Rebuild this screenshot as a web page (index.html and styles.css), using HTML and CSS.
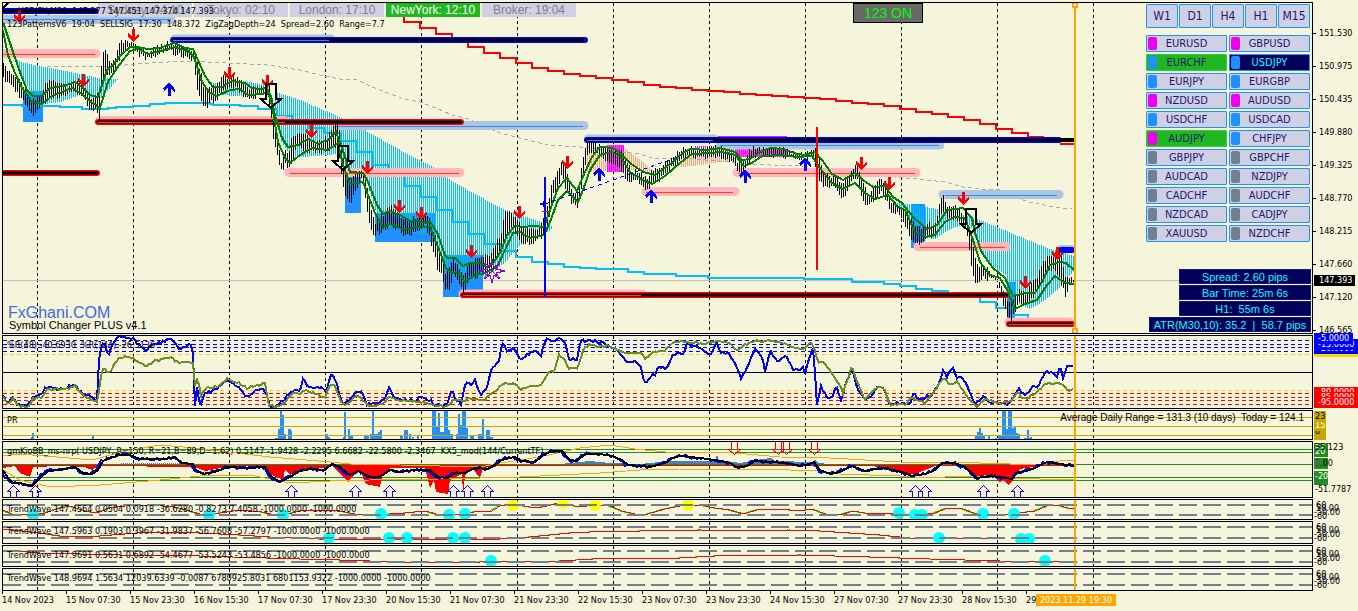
FILE: index.html
```html
<!DOCTYPE html>
<html lang="en">
<head>
<meta charset="utf-8">
<title>USDJPY,M30</title>
<link rel="stylesheet" href="styles.css">
</head>
<body>
<main class="terminal">
  <section class="panel">
    <div class="plot">
      <svg class="chart" id="price" viewBox="3 3 1309 330" preserveAspectRatio="none"></svg>
      <div class="hud">
        <div class="hud-left">
          <div class="sessions">
            <span class="session">Sydney: 04:10</span>
            <span class="session">Tokyo: 02:10</span>
            <span class="session">London: 17:10</span>
            <span class="session open">NewYork: 12:10</span>
            <span class="session">Broker: 19:04</span>
          </div>
          <div class="readout">123PatternsV6&nbsp; 19:04&nbsp; SELLSIG&nbsp; 17:30&nbsp; 148.372&nbsp; ZigZagDepth=24&nbsp; Spread=2.60&nbsp; Range=7.7</div>
          <div class="brand">FxGhani.COM</div>
          <div class="product">Symbol Changer PLUS v4.1</div>
        </div>
        <div class="hud-right">
          <div class="frames">
            <button>W1</button><button>D1</button><button>H4</button><button>H1</button><button>M15</button>
          </div>
          <div class="symbols">
            <button class="up">EURUSD</button><button class="up">GBPUSD</button>
            <button class="down signal">EURCHF</button><button class="down current">USDJPY</button>
            <button class="down">EURJPY</button><button class="down">EURGBP</button>
            <button class="up">NZDUSD</button><button class="up">AUDUSD</button>
            <button class="down">USDCHF</button><button class="down">USDCAD</button>
            <button class="up signal">AUDJPY</button><button class="down">CHFJPY</button>
            <button>GBPJPY</button><button>GBPCHF</button>
            <button>AUDCAD</button><button>NZDJPY</button>
            <button>CADCHF</button><button>AUDCHF</button>
            <button>NZDCAD</button><button>CADJPY</button>
            <button>XAUUSD</button><button>NZDCHF</button>
          </div>
          <div class="info">
            <span>Spread: 2.60 pips</span>
            <span>Bar Time: 25m 6s</span>
            <span>H1:&nbsp; 55m 6s</span>
            <span class="wide">ATR(M30,10): 35.2&nbsp; |&nbsp; 58.7 pips</span>
          </div>
        </div>
        <div class="title">USDJPY,M30&nbsp; 147.377 147.451 147.374 147.393</div>
        <button class="toggle">123 ON</button>
      </div>
    </div>
    <div class="scale prices">
      <span>151.530</span><span>150.975</span><span>150.435</span><span>149.880</span><span>149.325</span>
      <span>148.770</span><span>148.215</span><span>147.660</span><span>147.120</span><span>146.565</span>
      <b class="last">147.393</b>
    </div>
  </section>

  <section class="panel">
    <div class="plot">
      <svg class="chart" id="wpr" viewBox="3 336 1309 72" preserveAspectRatio="none"></svg>
      <div class="label">%R(48) -40.6930&nbsp; %R(144) -26.5136</div>
    </div>
    <div class="scale stack">
      <div class="tag gold" style="top:11px">-25.0000</div>
      <div class="tag blue" style="top:8px">-20.0000</div>
      <div class="tag blue" style="top:4px">-15.0000</div>
      <div class="tag blue first" style="top:-2px">-5.0000</div>
      <div class="tag red" style="top:52px">-80.0000</div>
      <div class="tag red" style="top:57px">-85.0000</div>
      <div class="tag red" style="top:62px">-95.0000</div>
    </div>
  </section>

  <section class="panel">
    <div class="plot">
      <svg class="chart" id="pr" viewBox="3 411 1309 28" preserveAspectRatio="none"></svg>
      <div class="label">PR</div>
      <div class="range">Average Daily Range = 131.3 (10 days)&nbsp; Today = 124.1</div>
    </div>
    <div class="scale stack">
      <div class="tag ochre" style="top:19px">10</div>
      <div class="tag ochre dark" style="top:16px">8</div>
      <div class="tag ochre" style="top:10px">15</div>
      <div class="tag ochre dark" style="top:1px">23</div>
    </div>
  </section>

  <section class="panel">
    <div class="plot">
      <svg class="chart" id="kio" viewBox="3 442 1309 55" preserveAspectRatio="none"></svg>
      <div class="label">gmKioBB_ms-nrp( USDJPY, P=150, R=21,B=89,D=1.62) 0.5147 -1.9428 -2.2295 6.6682 -22.5800 -2.3467&nbsp; KX5_mod(144/CurrentTF)</div>
    </div>
    <div class="scale stack">
      <div class="tag green" style="top:2px">30</div>
      <div class="tag green" style="top:5px">20</div>
      <div class="tag plain" style="top:1px">35.123</div>
      <div class="tag green" style="top:17px">0</div>
      <div class="tag plain" style="top:17px">0.00</div>
      <div class="tag green" style="top:33px">-30</div>
      <div class="tag green" style="top:30px">-20</div>
      <div class="tag plain" style="top:43px">-51.7787</div>
    </div>
  </section>

  <section class="panel">
    <div class="plot">
      <svg class="chart" id="wave1" viewBox="3 500 1309 19" preserveAspectRatio="none"></svg>
      <div class="label">TrendWave 147.4564 0.0504 0.0918 -36.6280 -0.8273 7.4058 -1000.0000 -1000.0000</div>
    </div>
    <div class="scale stack wave"><i>60</i><i>50.00</i><i>-50.00</i><i>-60</i></div>
  </section>
  <section class="panel">
    <div class="plot">
      <svg class="chart" id="wave2" viewBox="3 522 1309 21" preserveAspectRatio="none"></svg>
      <div class="label">TrendWave 147.5963 0.1903 0.3967 -31.9837 -56.7608 -57.2797 -1000.0000 -1000.0000</div>
    </div>
    <div class="scale stack wave"><i>60</i><i>50.00</i><i>-50.00</i><i>-60</i></div>
  </section>
  <section class="panel">
    <div class="plot">
      <svg class="chart" id="wave3" viewBox="3 546 1309 20" preserveAspectRatio="none"></svg>
      <div class="label">TrendWave 147.9691 0.5631 0.6892 -54.4677 -53.5243 -53.4856 -1000.0000 -1000.0000</div>
    </div>
    <div class="scale stack wave"><i>60</i><i>50.00</i><i>-50.00</i><i>-60</i></div>
  </section>
  <section class="panel">
    <div class="plot">
      <svg class="chart" id="wave4" viewBox="3 569 1309 21" preserveAspectRatio="none"></svg>
      <div class="label">TrendWave 148.9694 1.5634 12039.6339 -0.0087 6780925.8031 6801153.9322 -1000.0000 -1000.0000</div>
    </div>
    <div class="scale stack wave"><i>60</i><i>50.00</i><i>-50.00</i><i>-60</i></div>
  </section>

  <footer class="dates">
    <span>14 Nov 2023</span><span>15 Nov 07:30</span><span>15 Nov 23:30</span><span>16 Nov 15:30</span>
    <span>17 Nov 07:30</span><span>17 Nov 23:30</span><span>20 Nov 15:30</span><span>21 Nov 07:30</span>
    <span>21 Nov 23:30</span><span>22 Nov 15:30</span><span>23 Nov 07:30</span><span>23 Nov 23:30</span>
    <span>24 Nov 15:30</span><span>27 Nov 07:30</span><span>27 Nov 23:30</span><span>28 Nov 15:30</span>
    <span class="end"><span class="cut">29</span><b>2023.11.29 19:30</b></span>
  </footer>
</main>
<script src="chart.js"></script>
</body>
</html>
```
FILE: styles.css
```css
* { box-sizing: border-box; }

body {
  margin: 0;
  background: #f5f5dc;
  color: #000;
  font: 9px/12px "DejaVu Sans Condensed", "DejaVu Sans", sans-serif;
}

.terminal {
  display: grid;
  grid-template-rows: minmax(332px, 1fr) 74px 30px 57px 21px 23px 22px 23px 20px;
  row-gap: 1px;
  min-height: 100vh;
  padding: 2px 0 0 2px;
  overflow: hidden;
}

.panel {
  display: grid;
  grid-template-columns: minmax(0, 1fr) 45px;
  min-height: 0;
}
.plot {
  position: relative;
  border: 1px solid #000;
  min-width: 0;
}
.chart {
  position: absolute;
  inset: 0;
  width: 100%;
  height: 100%;
  overflow: hidden;
  shape-rendering: crispEdges;
}

.label {
  position: absolute;
  left: 4px;
  top: 3px;
  white-space: nowrap;
}
.range {
  position: absolute;
  right: 8px;
  top: 1px;
  white-space: nowrap;
  font: 10px/12px "Liberation Sans", Arial, sans-serif;
}

/* Overlay on the price chart */
.hud {
  position: absolute;
  inset: 0;
  display: flex;
  justify-content: space-between;
  font-family: "Liberation Sans", Arial, sans-serif;
}
.hud-left {
  display: flex;
  flex-direction: column;
}
.sessions {
  display: flex;
  gap: 2px;
  padding-left: 95px;
}
.session {
  width: 94px;
  height: 14px;
  background: #d0d0e4;
  color: #808080;
  font-size: 12px;
  line-height: 14px;
  text-align: center;
}
.session.open { background: #20b820; color: #fff; }
.title {
  position: absolute;
  left: 15px;
  top: 2px;
  font: 10px/12px "DejaVu Sans Condensed", "DejaVu Sans", sans-serif;
}
.readout {
  padding: 1px 0 0 4px;
  font: 9px/12px "DejaVu Sans Condensed", "DejaVu Sans", sans-serif;
  white-space: nowrap;
}
.title { font-size: 9px; }
.brand {
  margin-top: auto;
  padding-left: 5px;
  color: #4169e1;
  font-size: 16px;
  line-height: 10px;
}
.product {
  padding: 0 0 1px 6px;
  font-size: 11px;
  line-height: 14px;
}
.toggle {
  position: absolute;
  top: 0;
  right: 389px;
  width: 70px;
  height: 20px;
  padding: 0;
  border: 1px solid #000;
  background: #696969;
  color: #0f0;
  font: 14px/18px "Liberation Sans", Arial, sans-serif;
}

.hud-right {
  display: flex;
  flex-direction: column;
  align-items: flex-end;
  padding-top: 1px;
}
.frames {
  display: grid;
  grid-template-columns: repeat(5, 32px);
  column-gap: 1px;
  padding-right: 2px;
}
.frames button,
.symbols button {
  padding: 0;
  border: 1px solid #1e90ff;
  border-radius: 1px;
  background: #d0d0e4;
  color: #191970;
  font: 11px/14px "DejaVu Sans Condensed", "DejaVu Sans", sans-serif;
}
.frames button { height: 24px; font-size: 12px; }
.symbols {
  display: grid;
  grid-template-columns: 81px 81px;
  gap: 2px;
  padding: 7px 2px 0 0;
}
.symbols button {
  position: relative;
  height: 17px;
  text-align: center;
}
.symbols button::before {
  content: "";
  position: absolute;
  left: 1px;
  top: 1px;
  width: 9px;
  height: 13px;
  border-radius: 2px;
  background: #708090;
}
.symbols .up::before { background: #f000f0; }
.symbols .down::before { background: #1e90ff; }
.symbols .signal { background: #20b820; border-color: #32cd32; }
.symbols .current { background: #00005a; color: #0ff; }

.info {
  display: flex;
  flex-direction: column;
  align-items: flex-end;
  gap: 1px;
  margin-top: auto;
  padding: 0 1px 1px 0;
}
.info span {
  width: 132px;
  height: 15px;
  border: 1px solid #191970;
  background: #00005a;
  color: #0ff;
  font-size: 11px;
  line-height: 14px;
  text-align: center;
}
.info .wide { width: 162px; }

/* Scales */
.scale { position: relative; }
.prices {
  display: flex;
  flex-direction: column;
  padding-top: 15px;
  height: 332px;
}
.prices span {
  flex: none;
  height: 33px;
  line-height: 33px;
  display: flex;
  align-items: center;
}
.prices span::before {
  content: "";
  width: 3px;
  height: 1px;
  margin-right: 3px;
  background: #000;
}
.last {
  position: absolute;
  left: 1px;
  top: 273px;
  width: 41px;
  padding-left: 5px;
  background: #000;
  color: #fff;
  font-weight: normal;
  line-height: 11px;
}
.tag {
  position: absolute;
  left: 1px;
  padding-left: 4px;
  line-height: 11px;
  width: 44px;
  color: #fff;
}
.tag.first { width: 39px; }
.gold { background: #ffd700; }
.blue { background: #00f; }
.red { background: #f00; }
.ochre { background: #c8a800; width: 12px; padding-left: 1px; }
.green { background: #228b22; width: 14px; padding-left: 1px; }
.plain { color: #000; padding-left: 1px; }
.dark { color: #000; }
.wave i {
  position: absolute;
  left: 3px;
  top: 1px;
  font-style: normal;
  line-height: 11px;
}
.wave i:nth-child(2) { top: 4px; }
.wave i:nth-child(3) { top: 8px; left: 1px; }
.wave i:nth-child(4) { top: 12px; left: 1px; }

.dates {
  display: grid;
  grid-template-columns: repeat(16, 64fr) 332fr;
  margin-top: -1px;
  white-space: nowrap;
}
.dates > span {
  min-width: 0;
  line-height: 13px;
}
.dates > span::before {
  content: "";
  display: block;
  width: 1px;
  height: 3px;
  background: #000;
}
.cut {
  display: inline-block;
  width: 10px;
  vertical-align: top;
}
.end b {
  display: inline-block;
  width: 80px;
  background: #ffa500;
  color: #fff;
  font-weight: normal;
  line-height: 12px;
  text-align: center;
  vertical-align: top;
}
```
FILE: chart.js
```js
const NS = "http://www.w3.org/2000/svg";
let target;

function add(name, attrs) {
  const el = document.createElementNS(NS, name);
  for (const key in attrs) el.setAttribute(key, attrs[key]);
  target.appendChild(el);
}
const pts = text => text.trim().split(/\s+/).map(p => p.split(",").map(Number));
function at(list, x, column = 1) {
  for (let i = 1; i < list.length; i++) {
    if (x <= list[i][0]) {
      const a = list[i - 1], b = list[i];
      return a[column] + (b[column] - a[column]) * (x - a[0]) / (b[0] - a[0] || 1);
    }
  }
  return list[list.length - 1][column];
}
const poly = (list, stroke, width, dash) => add("polyline", {
  points: list.map(p => p.join(",")).join(" "), fill: "none", stroke,
  "stroke-width": width, "stroke-dasharray": dash || "none"
});
const line = (x1, y1, x2, y2, stroke, width, dash) => add("line", {
  x1, y1, x2, y2, stroke, "stroke-width": width || 1, "stroke-dasharray": dash || "none"
});
const rect = (x, y, width, height, fill) => add("rect", { x, y, width, height, fill });
const shape = (x, y, d, fill, stroke, width) => add("path", {
  d, fill, stroke: stroke || "none", "stroke-width": width || 0, transform: `translate(${x} ${y})`
});
const cap = (x1, x2, y, stroke, width) => add("line", {
  x1, x2, y1: y, y2: y, stroke, "stroke-width": width, "stroke-linecap": "round",
  "shape-rendering": "auto"
});
let seed = 7;
const noise = () => (seed = (seed * 16807) % 2147483647) / 2147483647;
function steps(list) {
  const out = [];
  list.forEach((p, i) => { if (i) out.push([p[0], list[i - 1][1]]); out.push(p); });
  return out;
}
function wobble(list, size) {
  const out = [];
  for (let x = list[0][0]; x <= list[list.length - 1][0]; x += 2)
    out.push([x, at(list, x) + (noise() - 0.5) * size]);
  return out;
}
function hatch(top, bottom, color) {
  const a = pts(top), b = pts(bottom);
  for (let x = a[0][0]; x <= a[a.length - 1][0]; x += 2)
    line(x + 0.5, Math.round(at(a, x)), x + 0.5, Math.round(at(b, x)), color);
}
function days(top, bottom) {
  for (let x = 37.5; x < 1100; x += 96) line(x, top, x, bottom, "#000", 1, "3 3");
}
const cursor = (top, bottom) => line(1075, top, 1075, bottom, "#ffa500", 2);

/* Price chart */
target = document.getElementById("price");
days(3, 333);
line(3, 280.5, 1312, 280.5, "#c0c0c0");

const zone = "#1e90ff";
[[23, 91, 20, 31], [345, 177, 16, 36], [375, 213, 60, 29], [443, 255, 40, 42], [911, 204, 14, 44], [1007, 282, 8, 36]]
  .forEach(r => rect(...r, zone));

const sky = "#00bfff";
hatch("15,58 20,62 60,70 99,78 117,79", "15,62 30,92 45,104 60,102 80,95 99,100 105,93 117,80", sky);
hatch("209,82 222,84 235,80 250,82 268,85", "209,84 222,95 235,96 250,97 268,93", sky);
hatch("275,92 300,100 340,117 366,131 400,150 430,165 450,180 500,208 544,223 552,226",
  "275,110 280,140 290,155 300,157 330,155 340,152 348,180 365,178 375,210 385,225 410,232 430,235 445,270 465,280 490,275 505,262 520,245 544,235 552,228", sky);
hatch("895,203 918,205 940,210 965,215 985,222 1018,236 1040,245 1050,249 1074,256",
  "895,206 912,225 925,238 935,239 945,232 955,227 970,225 978,245 990,265 1005,275 1012,300 1030,309 1045,300 1060,287 1074,270", sky);
hatch("587,150 600,146 624,148 640,160 655,172 670,163", "587,172 624,170 640,170 655,175 670,170", "#ffa07a");
hatch("681,150 740,152", "681,167 700,165 720,162 740,160", "#ffa07a");
hatch("607,145 623,145", "607,172 623,172", "#ff00ff");
add("rect", { x: 607, y: 145, width: 17, height: 27, fill: "#ff00ff", "fill-opacity": 0.7 });
hatch("695,146 787,146", "695,157 787,157", "#ff00ff");
add("rect", { x: 735, y: 146, width: 52, height: 11, fill: "#ff00ff", "fill-opacity": 0.7 });

poly(pts("47,66 100,67 150,63 187,61 267,65 300,70 320,75 340,79 356,79 372,87 388,93 404,99 420,102 436,108 452,115 468,119 500,133 516,137 532,141 548,145 580,147 640,154 652,158 680,158 730,162 740,164 800,166 818,170 917,179 945,182 963,187 980,189 1000,190 1028,202 1044,205 1060,208 1072,209"), "#a9a9a9", 1, "4 3");

const red = [22, 28, 34, 40, 47, 53, 58, 63, 68, 71, 74, 76, 78, 80, 82, 85, 87, 88, 90, 91, 92, 94, 95, 96, 97, 98, 99, 101, 103, 104, 106, 109, 112, 114, 117, 120, 124, 129, 133, 137, 137];
poly(steps([[404, 17]].concat(red.map((y, i) => [404 + 16 * i, y]))), "#f00", 2);
poly(steps(pts("3,105 22,106 60,107 82,109 108,108 116,107 133,106 150,104 165,103 210,104 213,105 240,106 258,109 277,116 293,121 308,128 324,133 340,141 356,152 372,165 388,176 404,186 420,197 436,210 452,222 468,234 484,244 500,251 516,257 532,262 548,264 564,267 580,268 596,269 628,272 644,274 676,276 708,278 804,279 852,282 884,284 900,286 916,289 932,291 948,294 964,297 980,302 996,308 1012,315 1028,319")), sky, 2);

const steel = "#b0c4de", pink = "#ffb6c1", blue = "#0000ff";
cap(4, 171, 19.5, steel, 9);
cap(175, 331, 38.5, steel, 8);
cap(338, 584, 125.5, steel, 9);
cap(588, 714, 138.5, steel, 8);
cap(720, 940, 145.5, steel, 8);
cap(943, 1059, 194.5, steel, 9);
cap(1061, 1071, 249, steel, 8);
rect(718, 136, 69, 1, "#ff00ff");
[[3, 96, 53.5], [100, 284, 120.5], [289, 460, 172.5], [646, 735, 191.5], [737, 916, 172.5], [918, 1006, 246.5], [463, 642, 294], [1009, 1070, 322]]
  .forEach(b => cap(...b, pink, 9));
[[3, 171, 19.5], [335, 583, 126.5], [720, 939, 145.5], [945, 1057, 195.5]]
  .forEach(b => line(b[0], b[2], b[1], b[2], zone));
[[3, 95, 54.5], [290, 459, 173.5], [646, 733, 192.5], [738, 915, 173.5], [920, 1005, 247.5]]
  .forEach(b => line(b[0], b[2], b[1], b[2], "#ff4500"));
function bar(x1, x2, y, outer, inner, end) {
  cap(x1, x2, y, outer, 6);
  cap(x1, x2, y, "#000", 3);
  if (end) line(x1, y + 0.5, end, y + 0.5, inner);
}
bar(3, 96, 11, blue, zone);
bar(173, 585, 40, blue, zone, 329);
bar(3, 97, 173, "#f00", "#ff4500");
bar(98, 461, 122, "#f00", "#ff4500", 285);
bar(587, 1059, 140, blue, zone, 713);
rect(1060, 138, 15, 4, "#000");
rect(1060, 143, 15, 2, "#f00");
bar(463, 1007, 295, "#f00", "#ff4500", 641);
bar(1009, 1072, 324, "#f00", "#ff4500", 1074);
cap(1061, 1072, 250, blue, 6);

/* Bars: x, high, low */
const range = pts("3,65,80 10,72,85 20,78,97 28,95,110 32,98,117 38,97,108 45,85,103 50,78,97 57,82,98 67,86,94 75,78,92 82,84,97 88,95,108 95,97,110 99,92,122 102,50,80 105,52,72 110,62,75 115,56,68 120,42,60 130,42,46 137,47,54 148,50,60 160,45,54 168,42,50 175,42,55 185,47,57 193,50,60 196,60,85 200,70,100 203,85,109 208,85,105 215,88,100 222,76,92 230,76,88 238,78,90 245,85,98 252,88,97 260,86,97 267,84,95 270,86,110 273,110,140 277,140,158 281,160,172 285,150,165 288,152,172 292,135,160 298,132,145 304,132,152 312,140,152 320,142,152 328,135,150 334,122,145 338,120,150 342,150,185 346,175,198 350,180,205 355,172,190 362,168,178 366,180,205 370,205,232 375,222,235 382,215,232 390,205,225 398,215,230 405,218,238 415,218,232 425,214,225 430,222,240 437,240,268 442,258,275 445,272,292 449,265,290 453,258,275 460,268,288 464,275,294 468,260,278 475,260,278 482,255,272 490,255,275 495,243,262 500,235,250 505,210,240 510,212,228 516,218,232 522,228,245 530,230,244 538,228,240 545,212,235 549,195,215 553,178,195 557,172,190 561,160,176 566,168,190 572,192,205 578,190,208 582,160,180 586,140,160 590,142,152 600,146,156 610,150,165 620,150,170 626,160,180 632,172,182 640,170,182 646,178,192 652,170,183 660,166,180 668,160,172 675,155,165 680,148,160 690,148,156 700,149,158 710,148,156 718,145,158 725,150,160 733,155,165 738,162,174 744,158,172 750,150,160 757,145,155 765,150,157 775,148,156 785,149,157 795,153,158 805,154,160 813,147,156 817,150,175 822,170,185 828,175,190 834,175,185 841,182,200 846,178,195 852,170,180 857,165,180 862,182,200 868,195,207 875,182,200 880,180,190 886,184,200 890,200,215 897,205,213 905,210,225 912,222,242 919,228,247 925,225,237 935,222,235 940,200,215 943,195,215 948,207,218 955,205,220 962,215,222 968,225,240 972,240,275 977,265,285 983,265,278 990,272,280 997,275,280 1003,290,305 1008,305,320 1011,300,322 1014,295,312 1020,290,302 1025,295,308 1030,286,302 1037,275,290 1043,262,280 1048,255,272 1054,255,270 1060,248,280 1065,275,298 1070,277,285 1073,277,284");
for (let x = 3; x < 1074; x += 2) {
  const a = at(range, x), b = at(range, x, 2);
  line(x + 0.5, Math.round(a + noise() * 5 - 2), x + 0.5, Math.round(b + 2 - noise() * 5), "#000");
}
poly(pts("3,22 14,55 20,72 27,90 33,96 42,96 50,88 57,87 67,85 75,82 83,88 90,95 98,97 102,85 107,70 113,65 120,56 130,47 137,47 148,49 160,48 168,45 175,43 185,48 193,49 198,60 205,76 213,87 222,87 232,81 245,83 252,88 260,89 267,88 271,96 275,115 282,138 288,147 298,145 308,139 318,144 328,140 336,132 342,148 350,172 363,173 368,182 377,205 383,214 390,211 400,215 410,221 430,222 437,232 445,255 448,258 455,258 463,266 470,263 480,263 487,267 493,263 500,253 507,235 515,226 523,227 533,226 544,227 550,210 558,188 567,178 577,191 585,172 592,157 600,147 613,148 620,153 630,163 643,172 655,175 673,162 680,155 690,149 707,150 720,148 735,152 742,160 750,159 760,152 770,148 783,149 797,154 805,155 815,152 822,160 832,174 843,180 855,173 863,180 873,187 885,186 893,197 902,203 913,217 927,229 937,225 947,210 963,208 972,218 975,233 982,253 993,268 1005,278 1013,296 1025,293 1035,293 1043,280 1050,265 1060,262 1066,263 1074,270"), "#008000", 2);
poly(pts("3,30 8,55 15,73 22,88 32,102 42,104 52,96 62,92 72,88 82,94 90,101 100,108 108,82 117,68 130,51 138,49 148,54 165,50 175,47 188,51 194,57 202,82 210,93 217,96 230,90 240,89 248,95 262,94 268,92 272,105 278,142 285,158 290,163 300,155 312,148 328,150 338,143 343,165 350,184 363,182 368,195 375,213 383,227 390,224 405,230 415,227 430,227 438,247 446,268 452,273 458,272 465,282 475,275 485,273 497,267 505,250 513,233 520,232 530,238 544,235 550,222 558,200 567,191 578,202 583,190 590,170 600,155 612,152 620,156 630,172 643,180 652,184 665,176 680,163 692,154 710,153 722,152 735,155 744,166 752,163 762,156 780,155 797,157 812,156 820,168 832,183 843,189 855,183 865,193 875,199 888,195 897,206 905,210 915,232 925,237 935,235 945,222 955,217 965,218 973,240 980,262 990,275 1000,278 1007,290 1015,309 1025,304 1037,300 1047,285 1055,276 1065,283 1074,284"), "#008000", 2);

line(545, 204, 678, 157, blue, 1, "4 4");
line(545, 177, 545, 297, blue, 2);
line(542, 211.5, 549, 211.5, "#f00");
shape(543, 204, "M-3-1h3v-2l4 3-4 3v-2h-3z", blue);
line(817, 127, 817, 270, "#f00", 2);

const down = "M-1.5-7h3v8l4-4v3.500l-5.500 6-5.500-6v-3.500l4 4z";
const up = "M-1.500 7h3v-8l4 4v-3.500l-5.500-6-5.500 6v3.500l4-4z";
pts("19,17 133,36 83,81 229,74 267,82 311,132 367,168 399,207 421,214 471,252 519,213 567,163 861,164 889,184 963,199 1025,283 1057,254")
  .forEach(p => shape(p[0] + 0.5, p[1], down, "#f00"));
pts("169,89 599,174 651,196 745,176 805,164").forEach(p => shape(p[0], p[1], up, blue));
pts("271,84 343,146 971,209").forEach(p => shape(p[0], p[1], "M-5 0H5V15H10L0 24-10 15H-5Z", "none", "#000", 2));
shape(492, 271, "M0-12 2-4 8-8 4-2 13 0 4 2 8 8 2 4 0 12-2 4-8 8-4 2-13 0-4-2-8-8-2-4ZM-5-5 5 5M5-5-5 5", "none", "#9400d3", 1);
line(3, 8, 8, 3, "#000", 2);
cursor(3, 333);
[5, 331].forEach(y => add("rect", { x: 1073, y: y - 2, width: 4, height: 4, fill: "#fff", stroke: "#ffa500", "stroke-width": 2 }));

/* Williams %R */
target = document.getElementById("wpr");
days(336, 408);
[340, 344, 347, 351].forEach(y => line(3, y + 0.5, 1312, y + 0.5, blue, 1, "4 3"));
[354, 390].forEach(y => line(3, y + 0.5, 1312, y + 0.5, "#ffd700", 1, "4 3"));
[393, 397, 400, 404].forEach(y => line(3, y + 0.5, 1312, y + 0.5, "#f00", 1, "4 3"));
line(3, 372.5, 1312, 372.5, "#000");
poly(wobble(pts("3,395 8,403 13,397 18,405 28,405 33,398 42,395 45,387 55,389 67,387 75,384 80,392 88,396 97,400 99,360 102,342 106,345 108,357 112,345 118,337 132,338 137,343 146,351 152,345 160,343 170,338 176,344 178,350 183,347 191,345 194,360 195,405 197,387 200,408 205,393 215,390 225,380 232,383 240,388 247,397 255,391 262,387 267,395 270,408 278,404 285,399 291,391 300,391 303,380 310,388 322,388 326,392 331,374 336,380 340,397 343,403 350,400 355,393 362,391 366,404 375,402 380,403 385,397 389,388 395,398 405,400 415,400 420,398 430,400 435,406 447,405 452,389 456,401 461,403 466,380 471,386 475,381 478,388 482,395 487,387 492,367 499,362 502,343 507,350 515,349 521,361 527,354 535,352 541,355 546,338 552,342 560,338 565,344 569,358 577,360 580,341 590,340 598,342 605,343 615,348 625,361 635,361 641,366 644,385 650,376 655,374 658,367 668,368 673,355 680,352 683,355 687,344 695,347 703,350 711,355 717,342 720,354 728,353 733,360 741,378 748,365 755,350 762,356 765,372 770,351 778,363 786,354 793,371 803,368 805,373 808,360 814,345 816,400 817,404 821,386 828,400 833,396 836,386 841,401 847,380 852,369 857,386 864,400 870,398 877,388 883,387 890,405 902,403 910,405 913,393 920,400 932,394 938,385 943,371 947,376 953,366 957,378 963,378 970,393 975,405 983,397 990,402 997,402 1007,405 1013,398 1019,389 1025,395 1033,387 1038,386 1043,376 1047,371 1052,373 1057,376 1060,366 1063,377 1067,367 1074,365"), 3), blue, 2);
poly(wobble(pts("3,396 8,404 13,398 18,406 28,407 33,399 42,397 47,389 67,389 75,386 80,393 90,399 98,402 100,378 104,366 108,375 115,363 119,357 132,357 137,361 146,366 155,361 170,357 178,363 185,362 193,363 195,385 198,378 201,395 207,387 218,387 227,379 237,382 247,388 257,385 265,384 269,405 275,407 285,403 292,393 300,394 305,390 315,394 325,397 330,384 335,386 340,400 345,405 357,396 362,399 368,406 380,405 390,397 400,401 420,402 440,406 448,406 455,399 463,401 470,398 485,400 490,394 497,390 502,384 515,384 521,389 530,386 540,386 548,373 555,370 559,354 565,361 568,368 578,368 583,350 590,344 597,347 608,346 620,351 632,353 640,353 645,358 655,352 665,350 673,343 680,341 690,342 705,344 718,340 730,344 738,351 745,345 757,341 770,341 785,344 795,348 803,349 812,342 815,350 818,362 824,363 833,375 840,385 843,393 852,366 857,382 865,400 877,387 884,388 890,405 905,404 912,398 925,403 937,387 943,378 950,384 958,382 970,401 977,406 985,399 1000,404 1012,400 1018,390 1020,396 1026,399 1037,392 1044,386 1048,382 1052,385 1060,383 1068,390 1074,390"), 2), "#6b8e23", 2);
cursor(336, 408);

/* PR histogram: x, width, height */
target = document.getElementById("pr");
days(411, 439);
pts("31,3,2 32,2,6 92,2,4 275,3,1 278,2,10 280,2,28 282,2,24 284,2,5 288,3,10 290,2,8 325,3,5 328,2,2 343,3,2 344,2,27 348,2,10 350,3,4 364,5,4 370,8,5 372,2,28 378,2,7 380,2,9 400,3,4 404,4,9 409,2,5 412,2,2 417,2,3 432,4,28 436,2,12 438,2,26 440,4,7 444,4,28 448,2,9 450,3,5 456,4,5 458,2,25 460,2,14 462,4,28 466,2,11 470,4,4 478,4,5 482,2,20 486,4,9 490,3,2 975,3,3 977,2,7 979,2,11 981,2,6 983,2,3 988,2,3 995,2,1 998,4,3 1002,4,28 1006,2,10 1008,4,28 1012,2,11 1014,2,12 1016,2,6 1018,2,5 1024,8,1 1027,2,9 1030,2,2")
  .forEach(p => rect(p[0], 439 - p[2], p[1], p[2], zone));
[417, 426, 435].forEach(y => line(3, y + 0.5, 1312, y + 0.5, "#c8a800"));
cursor(411, 439);

/* Kio bands */
target = document.getElementById("kio");
days(442, 497);
[449, 452, 477, 480].forEach(y => line(3, y + 0.5, 1312, y + 0.5, "#228b22"));
add("polygon", { fill: "#f00", points: "3,465 3,468 15,466 20,473 30,477 33,467 60,466 85,467 92,470 98,466 195,467 205,471 225,467 262,466 270,474 283,480 285,470 290,475 300,470 325,468 332,466 341,475 349,482 352,477 360,471 366,484 380,487 382,476 390,468 425,468 430,488 434,480 436,492 448,494 450,480 462,474 463,494 465,475 472,468 480,478 483,468 500,466 870,466 890,468 905,475 915,474 925,470 935,466 960,466 972,471 978,480 985,475 995,478 1000,483 1003,479 1008,485 1013,480 1020,469 1040,466 1074,466 1074,465" });
hatch("121,463 180,463", "121,465 180,465", "#4682b4");
add("polygon", { fill: "#4682b4", points: "550,465 580,462 590,461 610,463 640,464 670,461 680,461 715,461 717,454 719,460 740,463 755,460 771,458 775,461 812,462 815,459 818,463 840,465" });
line(3, 464.5, 1312, 464.5, "#228b22");
poly(pts("3,456 20,454 93,460 120,452 160,445 195,448 270,457 330,462 350,464 400,465 480,467 500,463 540,457 580,448 610,445 635,449 665,452 735,453 780,457 830,458 900,462 980,463 1040,465 1060,461 1074,460"), "#ffa500", 1);
poly(pts("3,470 20,480 50,487 100,485 160,480 200,476 250,475 290,483 330,481 370,480 440,479 520,477 600,473 640,470 680,469 760,469 820,471 840,474 900,476 930,478 960,476 1000,478 1040,479 1074,479"), "#ffa500", 1);
const kio = pts("3,470 8,478 13,483 20,483 32,486 40,478 48,471 60,470 75,467 83,473 92,474 98,470 103,461 110,458 120,455 130,455 140,459 165,459 175,457 182,463 193,464 196,470 203,474 215,472 228,467 245,468 265,467 272,477 280,482 290,477 300,471 310,469 325,470 332,464 340,467 350,475 358,471 370,477 380,477 390,470 400,472 415,470 430,470 438,477 448,478 455,473 465,473 475,468 488,469 495,465 503,459 515,457 522,461 535,462 545,454 553,451 562,451 570,460 577,461 585,454 600,454 612,456 622,460 628,465 640,466 650,467 658,465 665,463 673,458 680,456 700,458 715,460 730,463 738,468 747,466 755,461 770,462 785,463 800,466 810,464 814,462 820,470 830,474 840,472 852,466 865,471 875,469 887,468 895,471 903,472 912,476 925,474 935,470 942,463 955,463 965,467 972,473 977,478 990,476 1000,477 1012,479 1018,472 1027,471 1037,467 1047,462 1055,463 1065,465 1075,466");
poly(wobble(kio, 3).map(p => [p[0] - 2, p[1]]), blue, 2);
poly(kio, "#000", 2);
[13, 35, 291, 355, 389, 453, 467, 487, 915, 925, 983, 1017]
  .forEach(x => shape(x + 0.5, 485.5, "M0 0 6 6H3V13H-3V6H-6Z", "none", "#2000f0", 1));
[734, 778, 786, 814].forEach(x => shape(x + 0.5, 454.5, "M0 0 6-5H3V-14H-3V-5H-6Z", "none", "#f00", 1));
cursor(442, 497);

/* Trend waves */
const dot = (x, y, fill) => add("circle", { cx: x, cy: y, r: 6, fill, "shape-rendering": "auto" });
function wave(id, top, bottom, levels, curve, low, high) {
  target = document.getElementById(id);
  days(top, bottom);
  if (curve) {
    const list = pts(curve);
    poly(list.map(p => [p[0] - 2, p[1]]), "#0f0", 1);
    poly(list, "#f00", 1);
  }
  (low ? pts(low) : []).forEach(p => dot(...p, "#0ff"));
  (high ? pts(high) : []).forEach(p => dot(...p, "#ff0"));
  levels.forEach(y => line(3, y, 1312, y, "#708090", 2, "18 6"));
  cursor(top, bottom);
}
wave("wave1", 500, 519, [505, 515],
  "3,510 12,514 25,515 45,513 60,508 70,506 85,511 97,513 110,508 125,506 150,505 175,507 190,511 203,515 220,513 240,510 262,512 280,516 300,511 320,510 340,511 355,514 375,515 405,513 425,511 440,515 465,514 478,511 490,512 500,506 513,504 530,507 542,507 560,503 580,507 595,505 610,506 622,511 635,514 648,514 665,509 680,506 688,505 705,506 715,508 730,510 744,514 760,509 780,509 800,511 812,509 826,514 840,515 853,511 865,513 885,513 900,515 935,513 945,509 960,508 977,514 1000,515 1020,513 1035,511 1047,506 1057,505 1068,508 1074,509",
  "33,515 209,515 283,515 381,514 449,515 465,514 899,513 915,515 922,515 983,514 1014,514", "513,505 563,503 595,505 688,505");
wave("wave2", 522, 543, [527, 538],
  "3,529 40,533 60,536 100,536 150,532 200,533 240,535 270,537 320,539 380,539 500,539 530,537 570,533 610,531 640,531 700,530 740,531 790,530 820,531 850,533 880,535 910,538 1000,539 1060,539",
  "329,538 389,538 407,538 453,538 465,538 939,538 1021,539 1029,539");
wave("wave3", 546, 566, [551, 562],
  "3,550 40,553 120,555 200,556 300,559 340,560 400,562 480,562 560,561 610,558 680,558 715,556 800,555 870,557 930,559 1000,561 1060,562",
  "491,561 1045,561");
wave("wave4", 569, 590, [574, 585]);
```
